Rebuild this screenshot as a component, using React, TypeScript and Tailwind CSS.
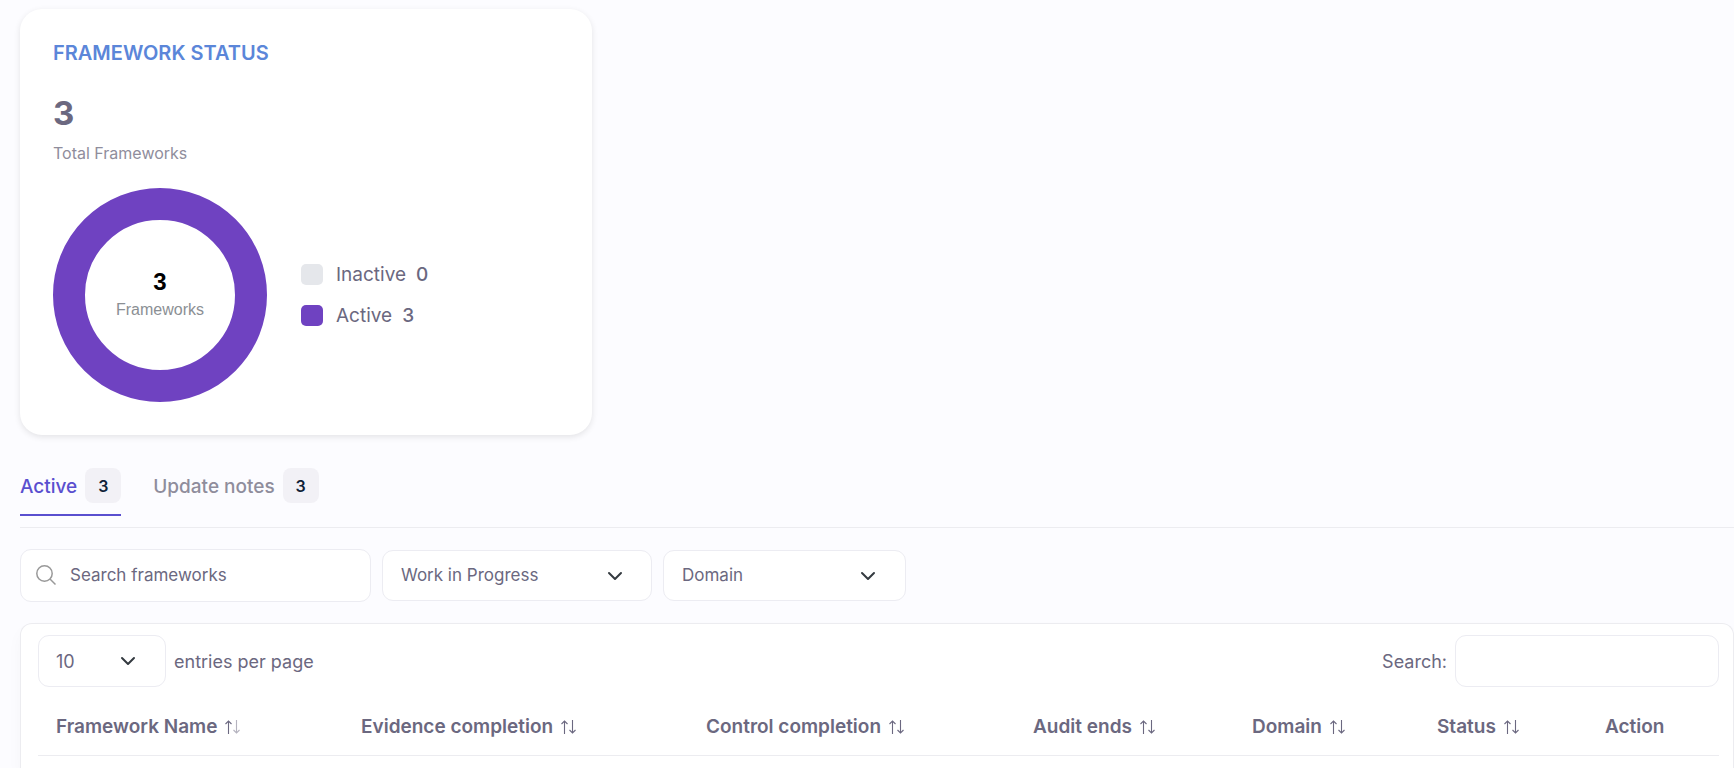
import React, { useState } from "react";

const columns = [
    { label: "Framework Name", width: "w-[305px]", sortable: true, sorted: true },
    { label: "Evidence completion", width: "w-[345px]", sortable: true },
    { label: "Control completion", width: "w-[327px]", sortable: true },
    { label: "Audit ends", width: "w-[219px]", sortable: true },
    { label: "Domain", width: "w-[185px]", sortable: true },
    { label: "Status", width: "w-[168px]", sortable: true },
    { label: "Action", width: "w-[132px]", sortable: false },
];

const tabs = [
    { id: "active", label: "Active", count: 3 },
    { id: "notes", label: "Update notes", count: 3 },
];

const Chevron = ({ className }: { className: string }) => (
    <svg
        viewBox="0 0 16 16"
        fill="none"
        stroke="#343a40"
        strokeWidth="2"
        strokeLinecap="round"
        strokeLinejoin="round"
        className={`pointer-events-none absolute top-1/2 h-4 w-4 -translate-y-1/2 ${className}`}
    >
        <path d="m2 5 6 6 6-6" />
    </svg>
);

const SortIcon = ({ sorted }: { sorted?: boolean }) => (
    <svg width="17" height="14" viewBox="0 0 17 14" fill="none" stroke="#6b6880" strokeWidth="1.1">
        <path d="M4.500 14V1M1.500 4 4.500 1 7.500 4" />
        <path d="M12.500 0v13M9.500 10l3 3 3-3" opacity={sorted ? 0.5 : 1} />
    </svg>
);

const StatusCard = () => (
    <section className="w-[572px] rounded-[22px] bg-white px-[33px] pt-7 pb-[33px] shadow-[0_2px_6px_rgba(0,0,0,0.1)]">
        <h2 className="text-[20px] leading-8 font-semibold text-[#5b86d9]">FRAMEWORK STATUS</h2>
        <p className="mt-6 text-[33px] leading-10 font-bold text-[#6b6880]">3</p>
        <p className="mt-2 text-[16px] leading-6 text-[#8f8d9c]">Total Frameworks</p>

        <div className="mt-[23px] flex items-center gap-[34px]">
            {/* Donut chart */}
            <div className="relative h-[214px] w-[214px]">
                <svg viewBox="0 0 214 214" className="h-full w-full">
                    <circle cx="107" cy="107" r="91" fill="none" stroke="#6f42c1" strokeWidth="32" />
                </svg>
                <div className="absolute inset-0 flex flex-col items-center justify-center pt-0.5 font-['Liberation_Sans',Arial,sans-serif]">
                    <span className="text-[24px] leading-7 font-bold text-black">3</span>
                    <span className="text-[16px] leading-7 text-[#8b8f94]">Frameworks</span>
                </div>
            </div>

            <ul className="flex flex-col gap-[13px] text-[19px] leading-7 text-[#6b6880]">
                <li className="flex items-center">
                    <span className="mr-[13px] h-[21px] w-[22px] rounded-[5px] bg-[#e5e7eb]"></span>
                    Inactive <span className="ml-2.5 font-medium">0</span>
                </li>
                <li className="flex items-center">
                    <span className="mr-[13px] h-[21px] w-[22px] rounded-[5px] bg-[#6f42c1]"></span>
                    Active <span className="ml-2.5 font-medium">3</span>
                </li>
            </ul>
        </div>
    </section>
);

const App = () => {
    const [tab, setTab] = useState("active");

    return (
        <main className="flex min-h-screen flex-col bg-[#fcfcff] pt-[9px] pl-5 font-['Inter',sans-serif] text-[#6b6880]">
            <StatusCard />

            {/* Tabs */}
            <nav className="mt-[33px] flex h-[60px] items-start gap-8 border-b border-[#ececf0]">
                {tabs.map((t) => (
                    <button
                        key={t.id}
                        type="button"
                        onClick={() => setTab(t.id)}
                        className={`flex items-center gap-2 pb-[11px] text-[19px] font-medium ${
                            tab === t.id ? "border-b-2 border-[#5a4fcf] text-[#5a4fcf]" : "text-[#8f8d9c]"
                        }`}
                    >
                        <span className="pt-1">{t.label}</span>
                        <span className="flex h-[35px] w-9 items-center justify-center rounded-lg bg-[#f2f1f6] text-[16px] font-semibold text-[#0f2137]">
                            {t.count}
                        </span>
                    </button>
                ))}
            </nav>

            {/* Filters */}
            <div className="mt-[21px] flex items-center gap-[11px] text-[17px]">
                <div className="relative">
                    <svg
                        viewBox="0 0 20 20"
                        fill="none"
                        stroke="#999999"
                        strokeWidth="1.5"
                        className="absolute top-4 left-4 h-5 w-5"
                    >
                        <circle cx="8.500" cy="8.500" r="7.700" />
                        <path d="m14 14 5.500 5.500" />
                    </svg>
                    <input
                        type="text"
                        aria-label="Search frameworks"
                        placeholder="Search frameworks"
                        className="h-[53px] w-[351px] rounded-[11px] border border-[#ececf2] bg-white pr-4 pb-0.5 pl-[49px] outline-none placeholder:text-[#6b6880]"
                    />
                </div>
                <div className="relative">
                    <select
                        aria-label="Progress"
                        className="h-[51px] w-[270px] appearance-none rounded-[11px] border border-[#ececf2] bg-white pr-12 pl-[18px] outline-none"
                    >
                        <option>Work in Progress</option>
                    </select>
                    <Chevron className="right-[29px]" />
                </div>
                <div className="relative">
                    <select
                        aria-label="Domain"
                        className="h-[51px] w-[243px] appearance-none rounded-[11px] border border-[#ececf2] bg-white pr-12 pl-[18px] outline-none"
                    >
                        <option>Domain</option>
                    </select>
                    <Chevron className="right-[30px]" />
                </div>
            </div>

            {/* Table card */}
            <section className="mt-[21px] flex-1 rounded-t-xl border border-b-0 border-[#ececf0] bg-white pt-[11px] pr-3.5 pl-[17px] shadow-[0_8px_16px_rgba(0,0,0,0.03)]">
                <div className="flex items-center justify-between text-[18px]">
                    <div className="flex items-center gap-2">
                        <div className="relative">
                            <select
                                id="page-size"
                                className="h-[52px] w-32 appearance-none rounded-[11px] border border-[#ececf2] bg-white pr-10 pl-[17px] outline-none"
                            >
                                <option>10</option>
                            </select>
                            <Chevron className="right-[30px]" />
                        </div>
                        <label htmlFor="page-size">entries per page</label>
                    </div>
                    <div className="flex items-center gap-2">
                        <label htmlFor="table-search">Search:</label>
                        <input
                            id="table-search"
                            type="search"
                            className="h-[52px] w-[264px] rounded-[11px] border border-[#ececf2] bg-white px-4 outline-none"
                        />
                    </div>
                </div>

                <table className="mt-2 w-full table-fixed">
                    <thead>
                        <tr className="border-b border-[#ececf0]">
                            {columns.map((col) => (
                                <th
                                    key={col.label}
                                    scope="col"
                                    className={`${col.width} h-[60px] pt-1 pl-[18px] text-left text-[19px] font-semibold whitespace-nowrap`}
                                >
                                    <span className="flex items-center gap-[7px]">
                                        {col.label}
                                        {col.sortable && <SortIcon sorted={col.sorted} />}
                                    </span>
                                </th>
                            ))}
                        </tr>
                    </thead>
                </table>
            </section>
        </main>
    );
};

export default App;
